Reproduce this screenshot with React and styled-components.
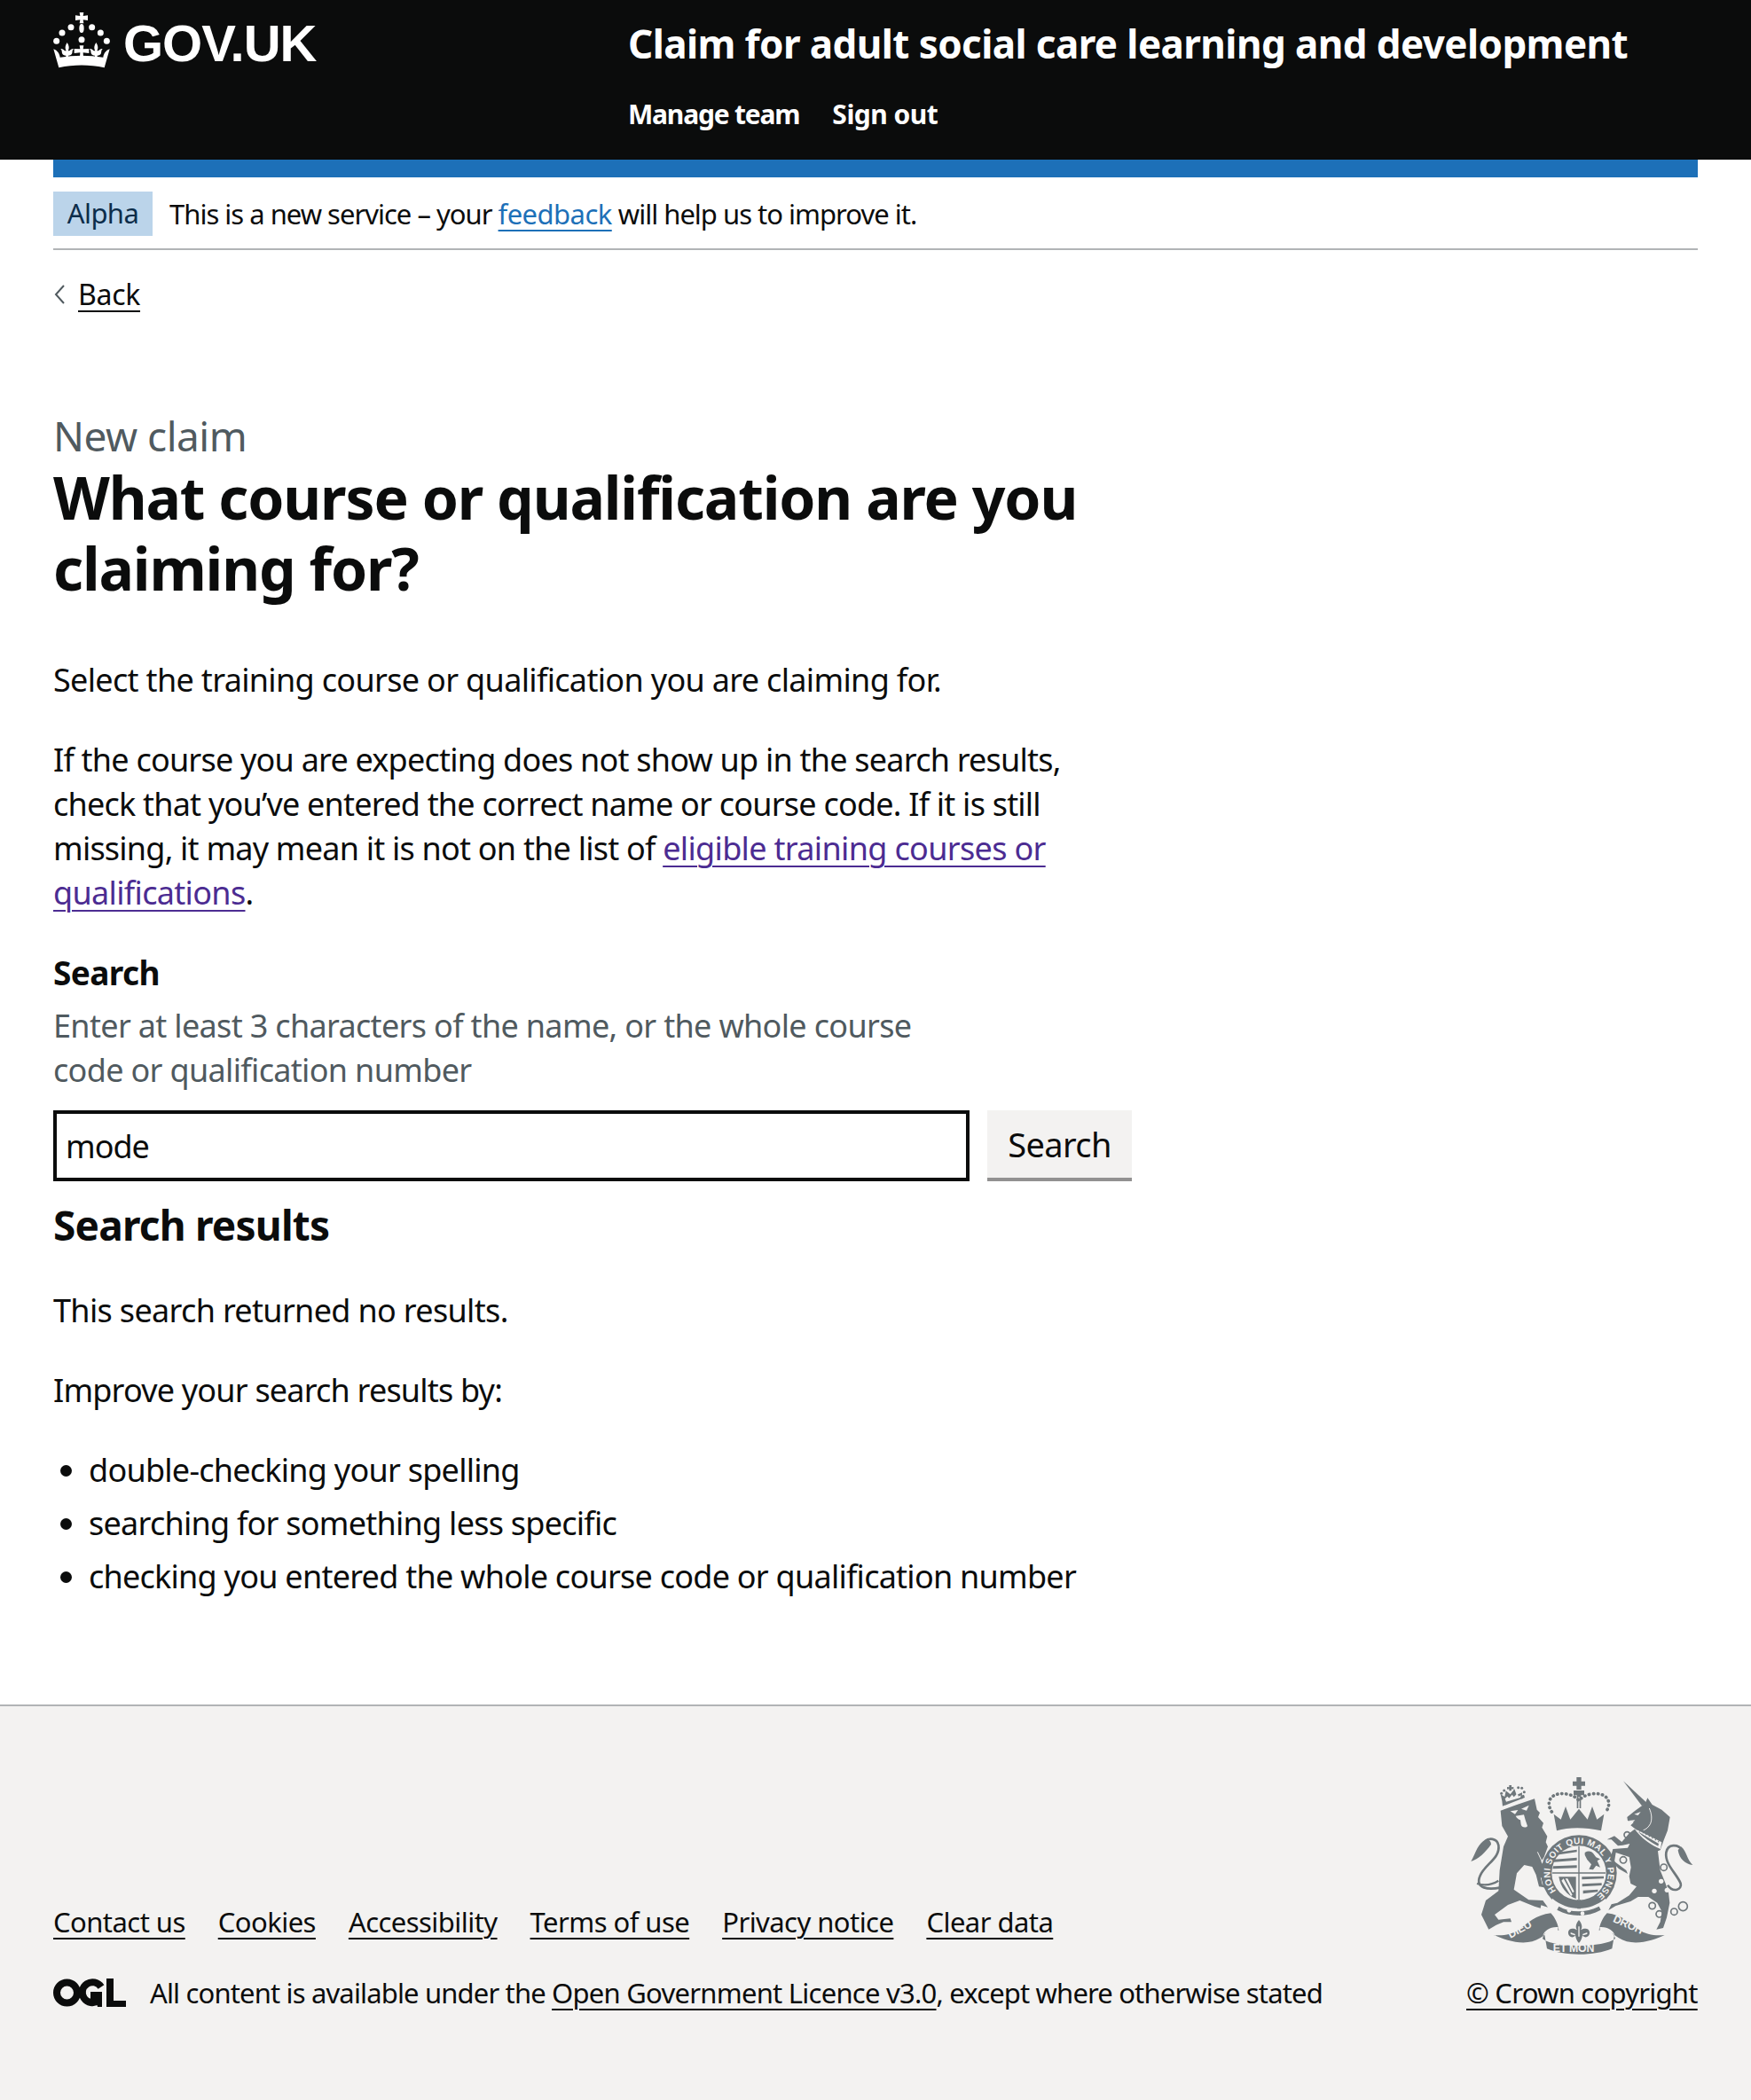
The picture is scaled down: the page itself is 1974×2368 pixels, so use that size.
import React from 'react';
import styled, { createGlobalStyle } from 'styled-components';

const GlobalStyle = createGlobalStyle`
  html, body { margin: 0; padding: 0; background: #fff; }
  body { font-family: "Noto Sans", Arial, sans-serif; color: #0b0c0c; }
  * { box-sizing: border-box; }
`;

const HeaderBar = styled.header`
  background: #0b0c0c;
  height: 180px;
  padding: 0 60px;
  display: grid;
  grid-template-columns: 648px 1fr;
`;

const Logo = styled.a`
  display: flex;
  align-items: flex-start;
  gap: 14px;
  padding-top: 13px;
  color: #fff;
  text-decoration: none;
`;

const LogoText = styled.span`
  font-family: "Liberation Sans", Arial, sans-serif;
  font-weight: 700;
  font-size: 58px;
  line-height: 50px;
  letter-spacing: -1px;
  padding-top: 11px;
`;

const ServiceBlock = styled.div`
  display: flex;
  flex-direction: column;
  gap: 25px;
  padding-top: 19px;
`;

const ServiceName = styled.div`
  color: #fff;
  font-weight: 700;
  font-size: 44px;
  line-height: 60px;
  letter-spacing: -0.6px;
`;

const HeaderNav = styled.nav`
  display: flex;
  gap: 37px;
`;

const HeaderLink = styled.a`
  color: #fff;
  font-weight: 700;
  font-size: 30px;
  line-height: 50px;
  letter-spacing: ${(p) => p.$spacing}px;
  text-decoration: none;
`;

const Container = styled.div`
  padding: 0 60px;
`;

const BlueBar = styled.div`
  height: 20px;
  background: #1d70b8;
`;

const PhaseBanner = styled.div`
  display: flex;
  align-items: center;
  gap: 19px;
  padding: 16px 0 14px;
  border-bottom: 2px solid #b1b4b6;
  font-size: 31px;
  line-height: 47px;
  letter-spacing: -1px;
`;

const PhaseTag = styled.strong`
  background: #bbd4ea;
  color: #0c2d4a;
  font-weight: 400;
  width: 112px;
  height: 50px;
  text-align: center;
  font-size: 31px;
  line-height: 48px;
  letter-spacing: -0.6px;
`;

const Underlined = styled.a`
  color: ${(p) => p.$color || '#0b0c0c'};
  text-decoration: underline;
  text-decoration-thickness: 2px;
  text-underline-offset: 6px;
`;

const FeedbackLink = styled(Underlined)`
  letter-spacing: -0.55px;
`;

const BackRow = styled.div`
  display: flex;
  align-items: center;
  gap: 14px;
  margin-top: 29px;
  font-size: 32px;
  line-height: 42px;
  letter-spacing: -0.3px;
`;

const Main = styled.main`
  padding-top: 108px;
  padding-bottom: 109px;
  width: 1240px;
`;

const Caption = styled.div`
  color: #505a5f;
  font-size: 46px;
  line-height: 60px;
  letter-spacing: -0.5px;
  margin-bottom: -1px;
`;

const Title = styled.h1`
  margin: 0 0 62px;
  font-size: 66px;
  line-height: 80px;
  font-weight: 700;
  letter-spacing: -1.15px;
  width: 1200px;
`;

const Body = styled.p`
  margin: 0 0 40px;
  font-size: 36px;
  line-height: 50px;
  letter-spacing: ${(p) => p.$spacing ?? -0.67}px;
  width: 1180px;
`;

const EligibleLink = styled(Underlined)`
  letter-spacing: -0.67px;
`;

const Label = styled.label`
  display: block;
  font-size: 37px;
  font-weight: 700;
  line-height: 50px;
  letter-spacing: -0.6px;
  margin-bottom: 10px;
`;

const Hint = styled.div`
  color: #505a5f;
  font-size: 36px;
  line-height: 50px;
  letter-spacing: -0.67px;
  width: 1000px;
  margin-bottom: 20px;
`;

const SearchRow = styled.div`
  display: flex;
  gap: 20px;
  margin-bottom: 19px;
`;

const SearchInput = styled.input`
  width: 1033px;
  height: 80px;
  border: 4px solid #0b0c0c;
  border-radius: 0;
  padding: 0 10px;
  font-family: "Noto Sans", Arial, sans-serif;
  font-size: 36px;
  letter-spacing: -1px;
  color: #0b0c0c;
  outline: none;
`;

const SearchButton = styled.button`
  width: 163px;
  height: 80px;
  background: #f3f2f1;
  border: 0;
  border-bottom: 4px solid #929191;
  font-family: "Noto Sans", Arial, sans-serif;
  font-size: 38px;
  letter-spacing: -0.6px;
  color: #0b0c0c;
  padding: 0;
`;

const SectionTitle = styled.h2`
  margin: 0 0 42px;
  font-size: 46px;
  line-height: 60px;
  font-weight: 700;
  letter-spacing: -0.8px;
`;

const BulletList = styled.ul`
  margin: 0;
  padding: 0 0 0 40px;
  font-size: 36px;
  line-height: 50px;
  letter-spacing: -0.75px;
  width: 1240px;
`;

const BulletItem = styled.li`
  margin-bottom: 10px;
`;

const FooterBar = styled.footer`
  background: #f3f2f1;
  border-top: 2px solid #b1b4b6;
  height: 446px;
  padding: 75px 60px 0;
  display: flex;
  justify-content: space-between;
  align-items: flex-start;
`;

const FooterMeta = styled.div`
  padding-top: 143px;
  font-size: 31px;
`;

const FooterLinks = styled.div`
  display: flex;
  gap: 37px;
  line-height: 50px;
  margin-bottom: 30px;
  letter-spacing: -0.55px;
`;

const LicenceRow = styled.div`
  display: flex;
  align-items: center;
  gap: 27px;
  line-height: 50px;
  letter-spacing: -0.85px;
`;

const LicenceLink = styled(Underlined)`
  letter-spacing: -0.75px;
`;

const CopyrightBlock = styled.div`
  display: flex;
  flex-direction: column;
  align-items: flex-start;
  gap: 8px;
  font-size: 31px;
  line-height: 50px;
  letter-spacing: -0.75px;
  width: 261px;
  white-space: nowrap;
`;

const ArmsFrame = styled.svg`
  display: block;
  margin-left: -3px;
`;

function Fleur({ x }) {
  return (
    <path
      transform={`translate(${x} 0)`}
      d="M0 120c-7 10-8 20-3 28h-5c-3-5-9-8-14-7 5 5 4 10 5 15 2 6 7 8 13 8v8h8v-8c6 0 11-2 13-8 1-5 0-10 5-15-5-1-11 2-14 7H3c5-8 4-18-3-28z"
    />
  );
}

function CrownLogo() {
  const dots = [[75, 68], [146, 68], [45, 87], [175, 87], [26, 115], [196, 115], [111, 110]];
  return (
    <svg width="65" height="64" viewBox="15 15 195 192" fill="#fff" aria-hidden="true">
      <path d="M104 18h14l-2 12 16-2v17l-16-2 2 12h-14l2-12-16 2V28l16 2z" />
      <ellipse cx="111" cy="72" rx="8" ry="15" />
      {dots.map(([x, y]) => (
        <circle key={`${x}-${y}`} cx={x} cy={y} r="10.5" />
      ))}
      <Fleur x={62} />
      <Fleur x={160} />
      <path d="M104 130h14l-2 12 20-1v15l-20-2 1 16h-12l1-16-20 2v-15l20 1z" />
      <path d="M16 142c14 5 20 16 22 28 48-8 98-8 146 0 2-12 8-23 22-28l-18 63c-50-11-104-11-154 0z" />
    </svg>
  );
}

function OglLogo() {
  return (
    <svg width="82" height="34" viewBox="0 0 82 34" aria-hidden="true">
      <circle cx="15.5" cy="17" r="11.5" fill="none" stroke="#0b0c0c" strokeWidth="8" />
      <path d="M54 10.5A11.5 11.5 0 1 0 51 26" fill="none" stroke="#0b0c0c" strokeWidth="8" />
      <path d="M42 16h13v17h-5l-1-4-7-3zM60 1h8v25h14v7H60z" fill="#0b0c0c" />
    </svg>
  );
}

function RoyalArms() {
  const ink = '#6f777b';
  const paper = '#f3f2f1';
  const label = { fontFamily: '"Liberation Sans", Arial, sans-serif', fontWeight: 700, fill: paper };
  return (
    <ArmsFrame width="260" height="215" viewBox="0 0 780 645" aria-hidden="true">
      <defs>
        <path id="garter" d="M313 399A98 98 0 1 1 449 417" />
      </defs>

      {/* lion */}
      <path fill={ink} d="M125 128L180 108 240 88 248 125 258 135 252 150 270 170 265 185 283 215 278 235 285 250 272 285 262 300 290 350 300 385 285 392 272 388 255 385 245 345 232 318 205 312 180 340 170 395 220 430 268 432 285 455 262 448 260 458 240 452 190 432 150 447 105 480 118 497 158 493 162 505 135 505 110 515 85 530 60 480 75 432 118 400 122 330 135 250 150 215 130 180Z" />
      <path fill="none" stroke={ink} strokeWidth="8" d="M125 388C85 397 38 392 55 350 70 310 125 290 118 245 113 220 85 220 72 232" />
      <path fill="none" stroke={ink} strokeWidth="7" d="M118 365C95 380 70 382 45 375" />
      <path fill={ink} d="M76 226C48 238 42 270 25 300c25-8 48-30 68-58 0-10-7-16-17-16z" />
      <path fill={paper} d="M158 130l26-4-10 14zM195 122l26-12-8 18zM176 146l28-4 5 18 7 20c-4 8-20 6-22-5l-2-15c-6-2-12-6-16-14z" />
      <path fill="none" stroke={paper} strokeWidth="3" d="M250 268l34 72M262 355l6 24M276 352l6 26" />

      {/* lion crown */}
      <path fill={ink} d="M130 95l-5-22 14 8 4-20 15 12 14-18 7 20 19-8-1 24 8-14-73 36z" />
      <path fill={ink} d="M132 98l72-24 3 10-67 26z" />
      <path fill={ink} d="M154 42h8v7l7-1v8l-7-1v6h-8v-6l-7 1v-8l7 1z" />
      {[[128, 70], [137, 60], [185, 50], [197, 52], [205, 65]].map(([x, y]) => (
        <circle key={x} cx={x} cy={y} r="4.5" fill={ink} />
      ))}
      <path fill={paper} d="M140 88l8-8 6 6 10-12 6 8 12-12 4 10 8-4-2 8-48 14z" />

      {/* large crown */}
      <path fill={ink} d="M382 15h16v14h13v15h-13v13h-16V44h-13V29h13zM372 60h36v16h-36zM383 76h14v44h-14z" />
      <path fill={paper} d="M388 82h4v38h-4z" />
      <path fill="none" stroke={ink} strokeWidth="11" strokeDasharray="1 14" strokeLinecap="round" d="M298 132c-25-40 5-68 50-60 18 3 32 10 42 22 10-12 24-19 42-22 45-8 75 20 50 60" />
      <path fill={ink} d="M305 140l24 18 16-44 16 44 29-36 29 36 16-44 16 44 24-18-10 56c-55-12-110-12-150 0z" />
      <path fill={paper} d="M322 202c45-13 90-13 140 0l-6 14c-40-10-80-10-126 0z" />

      {/* garter and shield */}
      <circle cx="390" cy="339" r="128" fill={ink} />
      <circle cx="390" cy="339" r="92" fill={paper} />
      <text fontSize="30" letterSpacing="1.5" {...label}>
        <textPath href="#garter">HONI SOIT QUI MAL Y PENSE</textPath>
      </text>
      <path fill="none" stroke={ink} strokeWidth="4" d="M390 248v182M300 339h180" />
      <path fill={ink} d="M313 270l70-10v8l-70 10zM307 293l76-6v9l-78 6zM303 316l80-3v9l-82 3z" />
      <path fill={ink} d="M410 270c10-6 20-6 28 2l10 14 14 6-10 6 10 22-14-6-10 14-14-2 8-16-14-16-8-16z" />
      <path fill={ink} d="M400 352l74-2v8l-74 3zM401 376l66-3v8l-66 4zM404 398l50-3v8l-50 6z" />
      <path fill={ink} d="M322 352h58v74c-30-10-52-38-58-74z" />
      <path fill={paper} d="M338 358l30 55-5 4-32-52zM352 358l22 44-5 4-25-48z" />

      {/* scroll under the shield */}
      <path fill={paper} d="M300 425c55 45 125 45 180 0l10 30-12 12c-55 35-115 35-176 0l-12-12z" />
      <path fill={ink} d="M322 452c40 22 90 22 136 0l6 12c-45 25-100 25-148 0z" />
      <circle cx="357" cy="466" r="7" fill={paper} />
      <circle cx="402" cy="476" r="7" fill={paper} />
      <path fill={ink} d="M384 430h12v30h-12z" />

      {/* motto ribbon */}
      <path fill={ink} d="M100 549c28 3 62 1 90-20 25-20 55-48 105-54 14 14 25 38 27 58-20-6-48-2-55 28 34 32 210 32 246 0-7-30-35-34-55-28 2-20 13-44 27-58 50 6 80 34 105 54 28 21 62 23 90 20-40 20-110 40-155 10l-15-10-8 46c-60 26-160 26-220 0l-8-46-15 10c-45 30-115 10-155-10z" />
      <path fill={paper} d="M268 552c4-18 24-32 52-30l-2 16c-24-4-40 0-50 14zM512 552c-4-18-24-32-52-30l2 16c24-4 40 0 50 14z" />
      <text x="158" y="561" fontSize="37" transform="rotate(-29 158 561)" {...label}>DIEU</text>
      <text x="302" y="605" fontSize="37" {...label}>ET MON</text>
      <text x="503" y="503" fontSize="37" transform="rotate(24 503 503)" {...label}>DROIT</text>

      {/* fleur */}
      <path fill={ink} d="M390 498c-12 14-12 26-6 34-10-8-32-8-30 12 2 14 18 16 24 6 2 10 4 18 12 26 8-8 10-16 12-26 6 10 22 8 24-6 2-20-20-20-30-12 6-8 6-20-6-34z" />
      <path fill={paper} d="M388 520h4v34h-4zM362 540l16 6-2 4-14-4zM418 540l-16 6 2 4 14-4z" />

      {/* unicorn */}
      <g transform="translate(390 0)">
        <path fill={ink} d="M150 28l80 74-17 10z" />
        <path fill={ink} d="M213 112L225 102 232 85 248 108 280 125 308 150 300 195 287 228 275 262 267 265 275 330 292 372 303 405 307 440 297 490 285 525 262 530 275 505 281 470 265 440 235 420 200 420 175 435 125 450 100 465 110 445 130 440 170 415 195 385 175 375 170 350 176 320 170 285 125 270 120 300 160 330 165 342 135 325 105 295 115 258 165 254 172 240 148 245 132 247 110 226 95 226 120 214 145 234 170 205 190 190 175 178 185 168 165 162 163 150 190 128Z" />
        <path fill={paper} d="M187 188L280 235 276 258C245 245 210 222 187 188Z" />
        <path fill={ink} d="M198 198L270 240 268 248C243 236 218 218 198 198Z" />
        <path fill="none" stroke={ink} strokeWidth="6" strokeDasharray="3 9" d="M195 190L275 235" />
        <path fill={paper} d="M187 140l22-8-9 12zM168 162l22-2-10 10z" />
        <path fill="none" stroke={paper} strokeWidth="3" d="M238 120c8 18 10 36 4 52-6 12-16 20-24 22" />
        <path fill="none" stroke={ink} strokeWidth="8" d="M300 380c20 28 50 14 44-6-14-34-54-64-49-104 5-30 40-30 55-8" />
        <path fill={ink} d="M345 250c20 15 20 45 40 62-26-2-46-22-50-50z" />
        <g fill={paper}>
          <circle cx="287" cy="320" r="12" />
          <circle cx="278" cy="367" r="8" />
          <circle cx="255" cy="400" r="8" />
          <circle cx="298" cy="397" r="8" />
        </g>
        <g fill="none" stroke={ink} strokeWidth="5">
          <circle cx="163" cy="210" r="10" />
          <circle cx="150" cy="295" r="11" />
          <circle cx="248" cy="450" r="11" />
          <circle cx="272" cy="478" r="11" />
          <circle cx="322" cy="470" r="11" />
          <circle cx="352" cy="452" r="15" />
          <circle cx="287" cy="320" r="11" />
        </g>
      </g>
    </ArmsFrame>
  );
}

export default function App() {
  return (
    <>
      <GlobalStyle />
      <HeaderBar>
        <Logo href="#">
          <CrownLogo />
          <LogoText>GOV.UK</LogoText>
        </Logo>
        <ServiceBlock>
          <ServiceName>Claim for adult social care learning and development</ServiceName>
          <HeaderNav>
            <HeaderLink href="#" $spacing={-1.2}>Manage team</HeaderLink>
            <HeaderLink href="#" $spacing={-0.5}>Sign out</HeaderLink>
          </HeaderNav>
        </ServiceBlock>
      </HeaderBar>
      <Container>
        <BlueBar />
        <PhaseBanner>
          <PhaseTag>Alpha</PhaseTag>
          <span>
            This is a new service – your <FeedbackLink href="#" $color="#1d70b8">feedback</FeedbackLink> will help us to improve it.
          </span>
        </PhaseBanner>
        <BackRow>
          <svg width="14" height="24" viewBox="0 0 14 24" aria-hidden="true">
            <path d="M12 2L3 12l9 10" fill="none" stroke="#505a5f" strokeWidth="2" />
          </svg>
          <Underlined href="#">Back</Underlined>
        </BackRow>
        <Main>
          <Caption>New claim</Caption>
          <Title>What course or qualification are you claiming for?</Title>
          <Body>Select the training course or qualification you are claiming for.</Body>
          <Body $spacing={-0.78}>
            If the course you are expecting does not show up in the search results, check that you’ve entered the correct name or course code. If it is still missing, it may mean it is not on the list of{' '}
            <EligibleLink href="#" $color="#4c2c92">eligible training courses or qualifications</EligibleLink>.
          </Body>
          <Label htmlFor="search">Search</Label>
          <Hint>Enter at least 3 characters of the name, or the whole course code or qualification number</Hint>
          <SearchRow>
            <SearchInput id="search" defaultValue="mode" />
            <SearchButton>Search</SearchButton>
          </SearchRow>
          <SectionTitle>Search results</SectionTitle>
          <Body>This search returned no results.</Body>
          <Body $spacing={-0.8}>Improve your search results by:</Body>
          <BulletList>
            <BulletItem>double-checking your spelling</BulletItem>
            <BulletItem>searching for something less specific</BulletItem>
            <BulletItem>checking you entered the whole course code or qualification number</BulletItem>
          </BulletList>
        </Main>
      </Container>
      <FooterBar>
        <FooterMeta>
          <FooterLinks>
            {['Contact us', 'Cookies', 'Accessibility', 'Terms of use', 'Privacy notice', 'Clear data'].map((t) => (
              <Underlined href="#" key={t}>{t}</Underlined>
            ))}
          </FooterLinks>
          <LicenceRow>
            <OglLogo />
            <span>
              All content is available under the <LicenceLink href="#">Open Government Licence v3.0</LicenceLink>, except where otherwise stated
            </span>
          </LicenceRow>
        </FooterMeta>
        <CopyrightBlock>
          <RoyalArms />
          <Underlined href="#">© Crown copyright</Underlined>
        </CopyrightBlock>
      </FooterBar>
    </>
  );
}
